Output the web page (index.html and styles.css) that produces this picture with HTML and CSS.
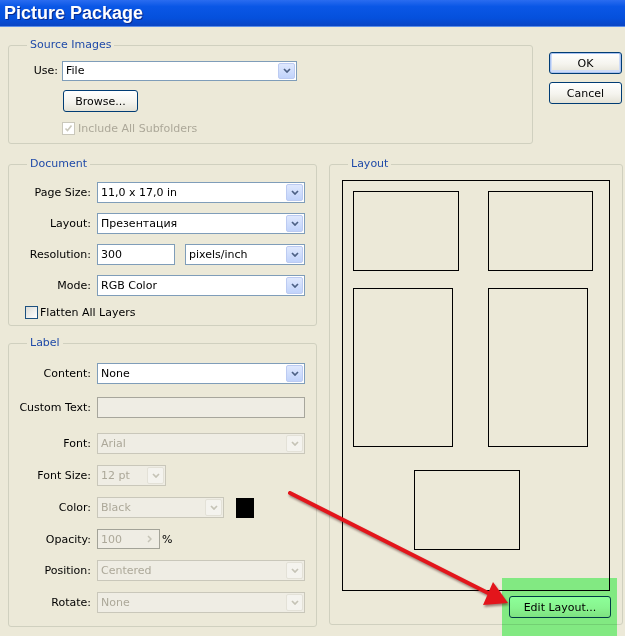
FILE: index.html
```html
<!DOCTYPE html>
<html>
<head>
    <meta charset="utf-8">
    <title>Picture Package</title>
    <link rel="stylesheet" href="styles.css">
</head>
<body>
<div class="window">
    <div class="titlebar">Picture Package</div>

    <div class="dialog">
        <div class="top-row">
            <fieldset class="group source">
                <legend>Source Images</legend>
                <div class="field use-row">
                    <span class="lbl lbl-use">Use:</span>
                    <div class="select use-select">
                        <span class="val">File</span>
                        <i class="drop"><svg width="8" height="5" viewBox="0 0 8 5"><path d="M1 1l3 3 3-3" fill="none" stroke="currentColor" stroke-width="1.7"/></svg></i>
                    </div>
                </div>
                <div class="browse-row">
                    <button class="btn browse">Browse...</button>
                </div>
                <div class="check check-sub off">
                    <span class="box"><svg width="9" height="9" viewBox="0 0 9 9"><path d="M1.5 4.5l2 2 4-5" fill="none" stroke="currentColor" stroke-width="1.6"/></svg></span>
                    <span>Include All Subfolders</span>
                </div>
            </fieldset>

            <div class="buttons">
                <button class="btn btn-side default">OK</button>
                <button class="btn btn-side">Cancel</button>
            </div>
        </div>

        <div class="bottom-row">
            <div class="left-col">
                <fieldset class="group document">
                    <legend>Document</legend>
                    <div class="rows doc-rows">
                        <div class="field">
                            <span class="lbl">Page Size:</span>
                            <div class="select full">
                                <span class="val">11,0 x 17,0 in</span>
                                <i class="drop"><svg width="8" height="5" viewBox="0 0 8 5"><path d="M1 1l3 3 3-3" fill="none" stroke="currentColor" stroke-width="1.7"/></svg></i>
                            </div>
                        </div>
                        <div class="field">
                            <span class="lbl">Layout:</span>
                            <div class="select full">
                                <span class="val">Презентация</span>
                                <i class="drop"><svg width="8" height="5" viewBox="0 0 8 5"><path d="M1 1l3 3 3-3" fill="none" stroke="currentColor" stroke-width="1.7"/></svg></i>
                            </div>
                        </div>
                        <div class="field">
                            <span class="lbl">Resolution:</span>
                            <div class="input res-input">300</div>
                            <div class="select units">
                                <span class="val">pixels/inch</span>
                                <i class="drop"><svg width="8" height="5" viewBox="0 0 8 5"><path d="M1 1l3 3 3-3" fill="none" stroke="currentColor" stroke-width="1.7"/></svg></i>
                            </div>
                        </div>
                        <div class="field">
                            <span class="lbl">Mode:</span>
                            <div class="select full">
                                <span class="val">RGB Color</span>
                                <i class="drop"><svg width="8" height="5" viewBox="0 0 8 5"><path d="M1 1l3 3 3-3" fill="none" stroke="currentColor" stroke-width="1.7"/></svg></i>
                            </div>
                        </div>
                        <div class="check check-flatten">
                            <span class="box"></span>
                            <span>Flatten All Layers</span>
                        </div>
                    </div>
                </fieldset>

                <fieldset class="group label">
                    <legend>Label</legend>
                    <div class="rows label-rows">
                        <div class="field">
                            <span class="lbl">Content:</span>
                            <div class="select full">
                                <span class="val">None</span>
                                <i class="drop"><svg width="8" height="5" viewBox="0 0 8 5"><path d="M1 1l3 3 3-3" fill="none" stroke="currentColor" stroke-width="1.7"/></svg></i>
                            </div>
                        </div>
                        <div class="field row-custom">
                            <span class="lbl">Custom Text:</span>
                            <div class="input full off"></div>
                        </div>
                        <div class="field row-font">
                            <span class="lbl">Font:</span>
                            <div class="select full off">
                                <span class="val">Arial</span>
                                <i class="drop"><svg width="8" height="5" viewBox="0 0 8 5"><path d="M1 1l3 3 3-3" fill="none" stroke="currentColor" stroke-width="1.7"/></svg></i>
                            </div>
                        </div>
                        <div class="field">
                            <span class="lbl">Font Size:</span>
                            <div class="select size off">
                                <span class="val">12 pt</span>
                                <i class="drop"><svg width="8" height="5" viewBox="0 0 8 5"><path d="M1 1l3 3 3-3" fill="none" stroke="currentColor" stroke-width="1.7"/></svg></i>
                            </div>
                        </div>
                        <div class="field">
                            <span class="lbl">Color:</span>
                            <div class="select color off">
                                <span class="val">Black</span>
                                <i class="drop"><svg width="8" height="5" viewBox="0 0 8 5"><path d="M1 1l3 3 3-3" fill="none" stroke="currentColor" stroke-width="1.7"/></svg></i>
                            </div>
                            <span class="swatch"></span>
                        </div>
                        <div class="field row-opacity">
                            <span class="lbl">Opacity:</span>
                            <div class="select spin off">
                                <span class="val">100</span>
                                <i class="step"><svg width="5" height="8" viewBox="0 0 5 8"><path d="M1 1l3 3-3 3" fill="none" stroke="currentColor" stroke-width="1.5"/></svg></i>
                            </div>
                            <span class="pct">%</span>
                        </div>
                        <div class="field">
                            <span class="lbl">Position:</span>
                            <div class="select full off">
                                <span class="val">Centered</span>
                                <i class="drop"><svg width="8" height="5" viewBox="0 0 8 5"><path d="M1 1l3 3 3-3" fill="none" stroke="currentColor" stroke-width="1.7"/></svg></i>
                            </div>
                        </div>
                        <div class="field">
                            <span class="lbl">Rotate:</span>
                            <div class="select full off">
                                <span class="val">None</span>
                                <i class="drop"><svg width="8" height="5" viewBox="0 0 8 5"><path d="M1 1l3 3 3-3" fill="none" stroke="currentColor" stroke-width="1.7"/></svg></i>
                            </div>
                        </div>
                    </div>
                </fieldset>
            </div>

            <fieldset class="group layout">
                <legend>Layout</legend>
                <div class="page">
                    <div class="cell c1"></div>
                    <div class="cell c2"></div>
                    <div class="cell c3"></div>
                    <div class="cell c4"></div>
                    <div class="cell c5"></div>
                </div>
                <div class="edit-row">
                    <button class="btn edit">Edit Layout...</button>
                </div>
            </fieldset>
        </div>
    </div>

    <div class="highlight"></div>
    <svg class="arrow" width="625" height="636" viewBox="0 0 625 636">
        <line x1="290" y1="493" x2="490" y2="594" stroke="#e3151b" stroke-width="4" stroke-linecap="round"/>
        <polygon points="508,603 493,582 483,605" fill="#e3151b"/>
    </svg>
</div>
</body>
</html>
```

FILE: styles.css
```css
body {
    margin: 0;
    background: #ece9d8;
    font-family: "DejaVu Sans", Verdana, sans-serif;
    font-size: 11px;
    color: #000;
}

.window {
    position: relative;
    width: 625px;
    height: 636px;
    overflow: hidden;
}

.titlebar {
    height: 26px;
    padding-left: 4px;
    border-bottom: 1px solid #5b8ee8;
    background: linear-gradient(#2a6cf0, #0a57e6 25%, #0550dc 70%, #0a45c4);
    color: #fff;
    font: bold 18px/26px "Liberation Sans", Arial, sans-serif;
    text-shadow: 1px 1px 0 #0b2a8c;
}

.dialog {
    padding: 11px 0 0 8px;
}

.top-row {
    display: flex;
    align-items: flex-start;
}

/* group boxes */
fieldset {
    margin: 0;
    padding: 0;
    min-width: 0;
}

.group {
    box-sizing: border-box;
    border: 1px solid #d0d0bf;
    border-radius: 3px;
}

legend {
    margin-left: 18px;
    padding: 0 3px;
    line-height: 14px;
    color: #1f4aa8;
}

.source {
    width: 525px;
    height: 106px;
}

.buttons {
    display: flex;
    flex-direction: column;
    gap: 8px;
    margin: 14px 0 0 16px;
}

.btn {
    box-sizing: border-box;
    height: 22px;
    padding: 0;
    font: inherit;
    color: #000;
    border: 1px solid #003c74;
    border-radius: 3px;
    background: linear-gradient(#fff, #f5f4ee 55%, #e4e2d6);
}

.btn-side { width: 73px; }

.btn.default {
    box-shadow: inset 0 0 0 1px #a9c2f1, inset 0 -1px 0 2px #cfdcf7;
}

.use-row {
    margin-top: 8px;
    padding-left: 21px;
}

.browse-row {
    margin-top: 9px;
    padding-left: 54px;
}

.browse { width: 75px; }

.check {
    display: flex;
    align-items: center;
    gap: 3px;
    height: 13px;
}

.check-sub {
    margin: 10px 0 0 53px;
    color: #aca899;
}

.check-flatten {
    padding-left: 16px;
    gap: 2px;
}

.box {
    box-sizing: border-box;
    width: 13px;
    height: 13px;
    border: 1px solid #1c5180;
    background: linear-gradient(135deg, #dcdcd6, #fff);
    display: flex;
    align-items: center;
    justify-content: center;
}

.check.off .box {
    border-color: #cac8bb;
    background: #fff;
    color: #cac8bb;
}

/* form rows */
.rows {
    display: flex;
    flex-direction: column;
}

.doc-rows {
    padding-top: 11px;
    gap: 10px;
}

.label-rows {
    padding-top: 13px;
    gap: 11px;
}

.row-custom { margin-top: 2px; }
.row-font { margin-top: 4px; }

.field {
    display: flex;
    align-items: center;
    height: 21px;
}

.row-opacity { height: 20px; }

.lbl {
    flex: none;
    width: 82px;
    margin-right: 6px;
    text-align: right;
    white-space: nowrap;
}

.lbl-use {
    width: 28px;
    margin-right: 4px;
}

.select,
.input {
    box-sizing: border-box;
    height: 21px;
    display: flex;
    align-items: center;
    padding-left: 3px;
    border: 1px solid #7f9db9;
    background: #fff;
    white-space: nowrap;
}

.select .val {
    flex: 1;
    overflow: hidden;
}

.select .drop,
.select .step {
    box-sizing: border-box;
    width: 17px;
    align-self: stretch;
    margin: 1px;
    display: flex;
    align-items: center;
    justify-content: center;
    border: 1px solid #bccbf2;
    border-radius: 2px;
    background: linear-gradient(#dfe8fd, #c1d3fb);
    color: #4d6185;
}

.use-select { width: 235px; height: 20px; }
.full { width: 208px; }
.res-input { width: 78px; }
.units { width: 120px; margin-left: 10px; }
.size { width: 69px; }
.color { width: 127px; }
.spin { width: 63px; height: 20px; }

.select.off,
.input.off {
    border-color: #c9c7ba;
    background: #efede4;
    color: #aca899;
}

.input.off { border-color: #a7a69c; }
.spin.off { border-color: #a3a398; }

.select.off .drop,
.select.off .step {
    border-color: #e3e1d7;
    background: #f4f3ee;
    color: #c5c3b6;
}

.select.off .step {
    border: none;
    background: none;
}

.swatch {
    width: 18px;
    height: 20px;
    margin-left: 12px;
    background: #000;
}

.pct { margin-left: 2px; }

.document { height: 169px; }

.label {
    height: 291px;
    margin-top: 10px;
}

.bottom-row {
    display: flex;
    align-items: flex-start;
    margin-top: 13px;
}

.left-col {
    flex: none;
    width: 309px;
}

/* layout preview */
.layout {
    flex: none;
    width: 294px;
    height: 468px;
    margin-left: 12px;
}

.page {
    position: relative;
    box-sizing: border-box;
    width: 268px;
    height: 411px;
    margin: 9px 0 0 12px;
    border: 1px solid #000;
}

.cell {
    position: absolute;
    box-sizing: border-box;
    border: 1px solid #000;
}

.c1 { left: 10px; top: 10px; width: 106px; height: 80px; }
.c2 { left: 145px; top: 10px; width: 105px; height: 80px; }
.c3 { left: 10px; top: 107px; width: 100px; height: 159px; }
.c4 { left: 145px; top: 107px; width: 100px; height: 159px; }
.c5 { left: 71px; top: 289px; width: 106px; height: 80px; }

.edit-row {
    display: flex;
    justify-content: flex-end;
    margin: 5px 11px 0 0;
}

.edit { width: 102px; }

/* annotation over the screenshot */
.highlight {
    position: absolute;
    left: 502px;
    top: 578px;
    width: 115px;
    height: 58px;
    background: rgb(141, 255, 153);
    mix-blend-mode: multiply;
}

.arrow {
    position: absolute;
    left: 0;
    top: 0;
    pointer-events: none;
    filter: drop-shadow(1px 2px 1px rgba(60, 0, 0, 0.45));
}
```
